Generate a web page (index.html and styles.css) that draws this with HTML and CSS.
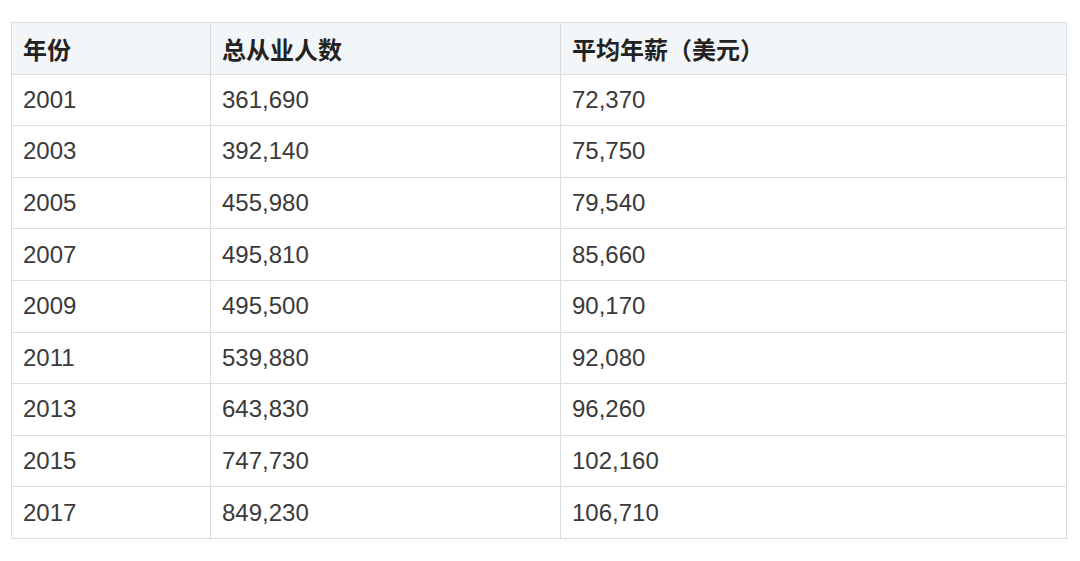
FILE: index.html
```html
<!DOCTYPE html>
<html lang="zh-CN">
<head>
<meta charset="utf-8">
<title>从业人数与平均年薪</title>
<link rel="stylesheet" href="styles.css">
</head>
<body>
<div class="page">
  <table class="data">
    <colgroup>
      <col class="c1">
      <col class="c2">
      <col class="c3">
    </colgroup>
    <thead>
      <tr><th>年份</th><th>总从业人数</th><th>平均年薪（美元）</th></tr>
    </thead>
    <tbody>
      <tr><td>2001</td><td>361,690</td><td>72,370</td></tr>
      <tr><td>2003</td><td>392,140</td><td>75,750</td></tr>
      <tr><td>2005</td><td>455,980</td><td>79,540</td></tr>
      <tr><td>2007</td><td>495,810</td><td>85,660</td></tr>
      <tr><td>2009</td><td>495,500</td><td>90,170</td></tr>
      <tr><td>2011</td><td>539,880</td><td>92,080</td></tr>
      <tr><td>2013</td><td>643,830</td><td>96,260</td></tr>
      <tr><td>2015</td><td>747,730</td><td>102,160</td></tr>
      <tr><td>2017</td><td>849,230</td><td>106,710</td></tr>
    </tbody>
  </table>
</div>
</body>
</html>
```

FILE: styles.css
```css
html, body {
  margin: 0;
  padding: 0;
  background: #ffffff;
}

.page {
  padding: 22px 0 0 11px;
}

.data {
  border-collapse: collapse;
  table-layout: fixed;
  width: 1055px;
  font-family: "Liberation Sans", "Noto Sans CJK SC", sans-serif;
  font-size: 24px;
  color: #3a3a3a;
}

.c1 { width: 199px; }
.c2 { width: 350px; }
.c3 { width: 506px; }

.data th,
.data td {
  border: 1px solid #dcdcdc;
  height: 51.6px;
  padding: 0 11px;
  text-align: left;
  vertical-align: middle;
  box-sizing: border-box;
}

.data th {
  background: #f3f6f9;
  color: #222222;
  font-family: "Noto Sans CJK SC", sans-serif;
  font-weight: 700;
  font-size: 24px;
}
```
